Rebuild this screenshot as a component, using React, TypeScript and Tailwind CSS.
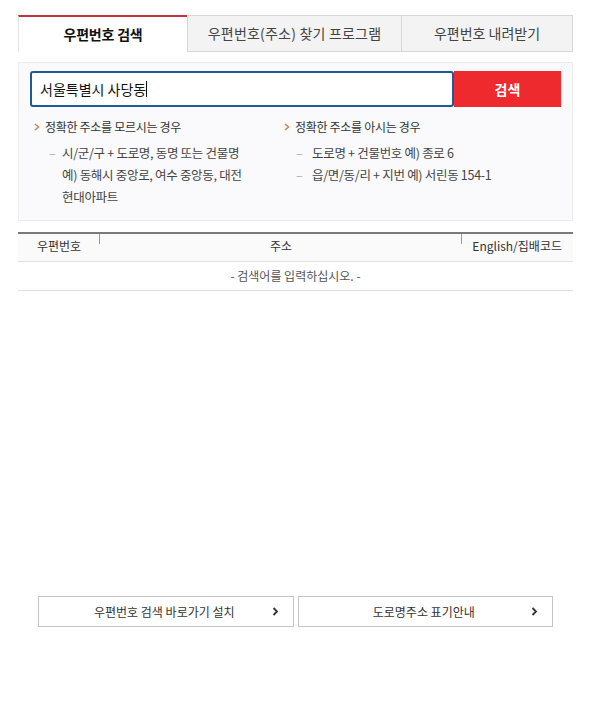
import React from "react";

const font = { fontFamily: '"Noto Sans CJK KR", "Noto Sans", sans-serif' };

function Arrow() {
  return (
    <svg width="6" height="8" viewBox="0 0 6 8" className="shrink-0">
      <path d="M1 1 L4.5 4 L1 7" stroke="#d08a4a" strokeWidth="1.6" fill="none" />
    </svg>
  );
}

function Chevron() {
  return (
    <svg width="7" height="9" viewBox="0 0 7 9" className="shrink-0">
      <path d="M1.5 1 L5 4.5 L1.5 8" stroke="#333" strokeWidth="1.8" fill="none" />
    </svg>
  );
}

export default function App() {
  return (
    <div className="w-[590px] h-[710px] bg-white" style={font}>
      <div className="pt-[15px] pl-[18px] pr-[17px]">
        {/* Tabs */}
        <div className="flex h-[37px]">
          <div className="w-[169px] border-t-2 border-t-[#c4343a] border-l border-l-[#e3e3e3] bg-white flex items-center justify-center text-[14px] font-bold text-[#111] tracking-[-0.2px]">
            우편번호 검색
          </div>
          <div className="w-[215px] border border-[#d6d6d6] bg-[#f3f3f3] flex items-center justify-center text-[14px] text-[#444] tracking-[0.2px]">
            우편번호(주소) 찾기 프로그램
          </div>
          <div className="flex-1 border border-l-0 border-[#d6d6d6] bg-[#f3f3f3] flex items-center justify-center text-[14px] text-[#444]">
            우편번호 내려받기
          </div>
        </div>

        {/* Search panel */}
        <div className="mt-[10px] border border-[#ececec] bg-[#fafafc] px-[11px] pt-[8px] pb-[12px]">
          <div className="flex h-[36px]">
            <div className="flex-1 border-2 border-[#1d5a97] rounded-[3px] bg-white flex items-center pl-[8px] text-[14px] text-[#111]">
              서울특별시 사당동<span className="inline-block w-px h-[16px] bg-[#111]" />
            </div>
            <div className="w-[107px] bg-[#ee2a2e] flex items-center justify-center text-[14px] font-bold text-white">
              검색
            </div>
          </div>
          <div className="flex mt-[11px] text-[12px] text-[#333] tracking-[-0.3px]">
            <div className="w-[254px] pl-[4px]">
              <div className="flex items-center gap-[5px] h-[18px]">
                <Arrow />
                <span>정확한 주소를 모르시는 경우</span>
              </div>
              <div className="flex mt-[6px] leading-[22px] text-[#444] text-[12.5px]">
                <span className="w-[28px] pl-[15px] text-[#aaa]">–</span>
                <span>
                  시/군/구 + 도로명, 동명 또는 건물명
                  <br />
                  예) 동해시 중앙로, 여수 중앙동, 대전
                  <br />
                  현대아파트
                </span>
              </div>
            </div>
            <div className="flex-1">
              <div className="flex items-center gap-[5px] h-[18px]">
                <Arrow />
                <span>정확한 주소를 아시는 경우</span>
              </div>
              <div className="mt-[6px] leading-[22px] text-[#444] text-[12.5px]">
                <div className="flex">
                  <span className="w-[28px] pl-[12px] text-[#aaa]">–</span>
                  <span>도로명 + 건물번호 예) 종로 6</span>
                </div>
                <div className="flex">
                  <span className="w-[28px] pl-[12px] text-[#aaa]">–</span>
                  <span>읍/면/동/리 + 지번 예) 서린동 154-1</span>
                </div>
              </div>
            </div>
          </div>
        </div>

        {/* Table */}
        <div className="mt-[11px] border-t-2 border-[#7a7a7a]">
          <div className="flex h-[28px] pb-[3px] bg-[#fafafa] border-b border-[#e2e2e2] text-[12px] text-[#333]">
            <div className="relative w-[82px] flex items-center justify-center">
              우편번호
              <span className="absolute right-0 top-0 w-px h-[10px] bg-[#999]" />
            </div>
            <div className="relative flex-1 flex items-center justify-center">
              주소
              <span className="absolute right-0 top-0 w-px h-[10px] bg-[#999]" />
            </div>
            <div className="w-[111px] flex items-center justify-end pr-[11px]">English/집배코드</div>
          </div>
          <div className="h-[29px] border-b border-[#e2e2e2] flex items-center justify-center text-[12px] text-[#555]">
            - 검색어를 입력하십시오. -
          </div>
        </div>

        {/* Bottom buttons */}
        <div className="mt-[305px] flex gap-[4px] px-[20px]">
          <div className="w-[256px] h-[31px] border border-[#c4c4c4] flex items-center text-[12px] text-[#333]">
            <span className="flex-1 text-center pl-[18px]">우편번호 검색 바로가기 설치</span>
            <span className="pr-[14px]"><Chevron /></span>
          </div>
          <div className="w-[256px] h-[31px] border border-[#c4c4c4] flex items-center text-[12px] text-[#333]">
            <span className="flex-1 text-center pl-[18px]">도로명주소 표기안내</span>
            <span className="pr-[14px]"><Chevron /></span>
          </div>
        </div>
      </div>
    </div>
  );
}
